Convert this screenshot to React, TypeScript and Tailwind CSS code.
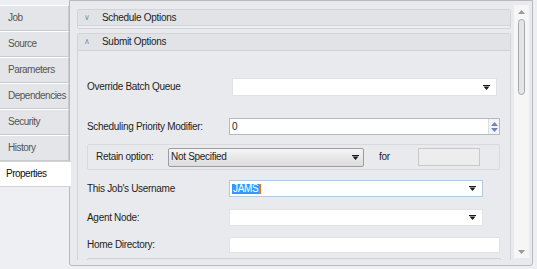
import React from 'react';

const tabs = ['Job', 'Source', 'Parameters', 'Dependencies', 'Security', 'History', 'Properties'];

const Arrow: React.FC = () => (
  <svg width="7" height="5" viewBox="0 0 7 5" className="shrink-0">
    <rect x="0" y="0" width="7" height="1" fill="#1a1a1a" />
    <path d="M0.5 1.5 L6.5 1.5 L3.5 5 Z" fill="#1a1a1a" />
  </svg>
);

const Combo: React.FC<{ w: string; h?: string; focused?: boolean; children?: React.ReactNode }> = ({
  w,
  h = 'h-[17px]',
  focused,
  children,
}) => (
  <div
    className={`${w} ${h} bg-white border ${
      focused ? 'border-[#b4c9e0]' : 'border-[#e1e2e5]'
    } flex items-center pl-[2px] pr-[6px]`}
  >
    <div className="flex-1 flex items-center">{children}</div>
    <Arrow />
  </div>
);

const Row: React.FC<{ label: string; mt: string; children: React.ReactNode }> = ({ label, mt, children }) => (
  <div className={`${mt} flex items-center`}>
    <div className="w-[151px] pl-[9px] text-[#1e1e1e]">{label}</div>
    {children}
  </div>
);

export default function App() {
  return (
    <div
      className="w-[537px] h-[269px] bg-[#eeeff2] flex overflow-hidden text-[10px] tracking-[-0.3px] leading-none"
      style={{ fontFamily: '"Liberation Sans", Arial, sans-serif' }}
    >
      {/* tabs */}
      <div className="w-[69px] shrink-0 flex flex-col pt-[5px] z-10 tracking-[-0.5px]">
        {tabs.map((t) => {
          const active = t === 'Properties';
          return (
            <div
              key={t}
              className={
                active
                  ? 'w-[71px] h-[26px] bg-white border-y border-[#d2d3d6] flex items-center pl-[6px] text-[#111]'
                  : 'w-[69px] h-[26px] bg-[#e4e5e8] border-t border-white border-b border-b-[#c9cacd] border-r border-r-[#c9cacd] flex items-center pl-[8px] text-[#555]'
              }
            >
              {t}
            </div>
          );
        })}
      </div>

      {/* main panel */}
      <div className="w-[464px] h-[266px] shrink-0 bg-[#e9eaed] border border-[#b9babd] rounded-b-[3px] flex pl-[7px] pr-[3px] pt-[4px] pb-[5px]">
        <div className="flex-1 flex flex-col overflow-hidden pt-[4px] mr-[3px]">
          {/* Schedule Options */}
          <div className="h-[20px] shrink-0 border border-[#d3d4d8] rounded-[2px] bg-[#eceef0] flex flex-col">
            <div className="h-[16px] bg-[#e2e3e7] border-b border-[#d3d4d8] flex items-center text-[#1e1e1e]">
              <span className="w-[24px] pl-[6px] text-[#8a8b90] text-[8px]">&#x2228;</span>
              Schedule Options
            </div>
          </div>

          {/* Submit Options */}
          <div className="mt-[4px] flex-1 border border-[#d3d4d8] border-b-0 rounded-t-[2px] bg-[#e9eaed] flex flex-col">
            <div className="h-[17px] shrink-0 bg-[#e2e3e7] border-b border-[#cfd0d4] flex items-center text-[#1e1e1e]">
              <span className="w-[24px] pl-[6px] text-[#8a8b90] text-[8px]">&#x2227;</span>
              Submit Options
            </div>

            <Row label="Override Batch Queue" mt="mt-[27px]">
              <div className="ml-[3px]">
                <Combo w="w-[265px]" h="h-[18px]" />
              </div>
            </Row>

            <Row label="Scheduling Priority Modifier:" mt="mt-[22px]">
              <div className="w-[271px] h-[17px] bg-white border border-[#b8b9bc] flex items-center pl-[2px] text-[#1e1e1e]">
                <span className="flex-1">0</span>
                <div className="w-[11px] h-[15px] flex flex-col justify-center items-center gap-[2px] border-l border-[#dcdde0] bg-[#f3f4f6]">
                  <svg width="7" height="4" viewBox="0 0 7 4">
                    <path d="M0 4 L3.5 0 L7 4 Z" fill="#6f84b4" />
                  </svg>
                  <svg width="7" height="4" viewBox="0 0 7 4">
                    <path d="M0 0 L7 0 L3.5 4 Z" fill="#6f84b4" />
                  </svg>
                </div>
              </div>
            </Row>

            {/* Retain group */}
            <div className="mt-[9px] ml-[9px] w-[413px] h-[26px] border border-[#d9dadd] rounded-[2px] flex items-center">
              <span className="w-[80px] pl-[8px] text-[#1e1e1e]">Retain option:</span>
              <div className="w-[196px] h-[19px] border border-[#9c9da0] rounded-[2px] bg-gradient-to-b from-[#f4f4f4] to-[#dcdcdc] flex items-center pl-[2px] pr-[4px] text-[#1e1e1e]">
                <span className="flex-1">Not Specified</span>
                <Arrow />
              </div>
              <span className="ml-[15px] w-[39px] text-[#1e1e1e]">for</span>
              <div className="w-[62px] h-[18px] border border-[#c7c8cb] bg-[#ededee]" />
            </div>

            <Row label="This Job's Username" mt="mt-[10px]">
              <Combo w="w-[254px]" focused>
                <span className="bg-[#3399ff] text-white px-[1px] border-r-2 border-[#e07a1a]">JAMS</span>
              </Combo>
            </Row>

            <Row label="Agent Node:" mt="mt-[12px]">
              <Combo w="w-[254px]" />
            </Row>

            <Row label="Home Directory:" mt="mt-[11px]">
              <div className="w-[271px] h-[16px] bg-white border border-[#e1e2e5]" />
            </Row>

            <div className="mt-[5px] ml-[9px] w-[414px] h-[10px] border border-[#cfd0d4] rounded-t-[2px]" />
          </div>
        </div>

        {/* scrollbar */}
        <div className="w-[15px] shrink-0 bg-[#f6f6f7] flex flex-col items-center pt-[5px] pb-[4px] mb-[2px]">
          <svg width="7" height="4" viewBox="0 0 7 4">
            <path d="M0 4 L3.5 0 L7 4 Z" fill="#9a9a9a" />
          </svg>
          <div className="mt-[5px] w-[7px] h-[76px] rounded-full border border-[#a6a7aa] bg-[#e4e5e8]" />
          <div className="flex-1" />
          <svg width="7" height="4" viewBox="0 0 7 4">
            <path d="M0 0 L7 0 L3.5 4 Z" fill="#9a9a9a" />
          </svg>
        </div>
      </div>
    </div>
  );
}
